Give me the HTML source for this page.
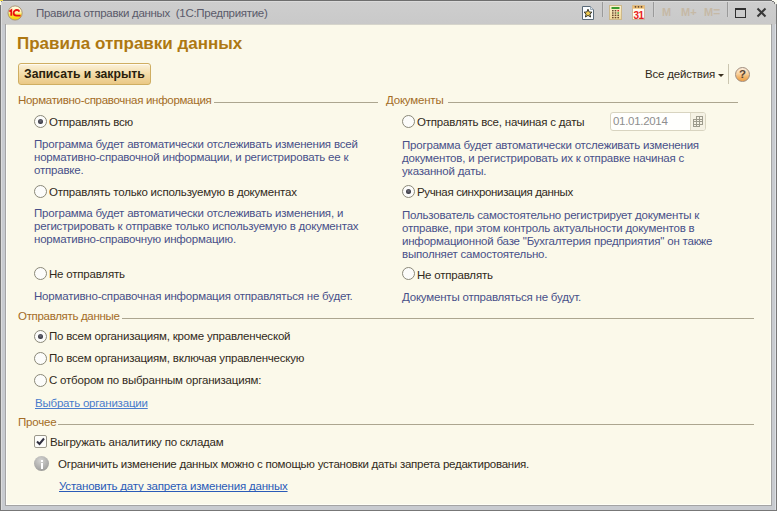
<!DOCTYPE html>
<html><head><meta charset="utf-8">
<style>
*{margin:0;padding:0;box-sizing:border-box}
html,body{width:777px;height:511px;overflow:hidden;background:#fbf9ea}
body{position:relative;font-family:"Liberation Sans",sans-serif}
.a{position:absolute}
.t{position:absolute;white-space:nowrap;font-size:11.5px;line-height:13px;height:13px;letter-spacing:-0.2px;}
.sec{color:#a36c26}
.txt{color:#31291a}
.desc{color:#485089}
.ln{position:absolute;height:1px;background:#aca690}
.rad{position:absolute;width:13px;height:13px;border-radius:50%;border:1px solid #8a8878;background:#fcfcfa}
.rad.on::after{content:"";position:absolute;left:3px;top:3px;width:5px;height:5px;border-radius:50%;background:radial-gradient(circle at 50% 40%,#70707a,#34343f 70%)}
.link{color:#2a5bb8;text-decoration:underline;text-underline-offset:1px;text-decoration-skip-ink:none}
</style></head><body>
<!-- window frame -->
<div class="a" style="left:0;top:0;width:777px;height:511px;background:#c8cbd0"></div>
<div class="a" style="left:0;top:0;width:777px;height:25px;background:linear-gradient(#cecece,#c9c9c9)"></div>
<div class="a" style="left:0;top:0;width:777px;height:1px;background:#6e6e6e"></div>
<div class="a" style="left:1px;top:1px;width:775px;height:1px;background:#dadada"></div>
<div class="a" style="left:0;top:0;width:1px;height:511px;background:#777"></div>
<div class="a" style="left:1px;top:1px;width:1px;height:509px;background:#dcdcdc"></div>
<div class="a" style="left:776px;top:0;width:1px;height:511px;background:#777"></div>
<div class="a" style="left:775px;top:24px;width:1px;height:486px;background:#dde0e4"></div>
<div class="a" style="left:0;top:510px;width:777px;height:1px;background:#777"></div>
<div class="a" style="left:6px;top:24px;width:765px;height:1px;background:#d6d5cc"></div>
<div class="a" style="left:6px;top:25px;width:765px;height:480px;background:#fbf9ea;border-left:1px solid #fffef8;box-shadow:inset -1px 0 0 #fffff6,inset 0 -1px 0 #fffff6"></div>
<div class="a" style="left:5px;top:24px;width:1px;height:482px;background:#a4a4a4"></div>
<div class="a" style="left:771px;top:24px;width:1px;height:482px;background:#a4a4a4"></div>
<div class="a" style="left:5px;top:505px;width:767px;height:1px;background:#a4a4a4"></div>
<!-- corners -->
<div class="a" style="left:0;top:0;width:3px;height:1px;background:#f0d840"></div>
<div class="a" style="left:0;top:1px;width:1px;height:4px;background:#fafae0"></div>
<div class="a" style="left:1px;top:1px;width:1px;height:1px;background:#8a8aa0"></div>
<div class="a" style="left:772px;top:0;width:5px;height:1px;background:#fafaf0"></div>
<div class="a" style="left:774px;top:1px;width:3px;height:1px;background:#fafaf0"></div>
<div class="a" style="left:775px;top:2px;width:2px;height:2px;background:#f4f4ea"></div>
<div class="a" style="left:772px;top:1px;width:2px;height:1px;background:#7a7a7a"></div>
<div class="a" style="left:774px;top:2px;width:1px;height:2px;background:#7a7a7a"></div>
<div class="a" style="left:776px;top:4px;width:1px;height:1px;background:#888"></div>
<!-- title -->
<svg class="a" style="left:7px;top:5px" width="17" height="17" viewBox="0 0 17 17"><defs><linearGradient id="lg" x1="0" y1="0" x2="0" y2="1"><stop offset="0" stop-color="#fffce8"/><stop offset="0.45" stop-color="#fff7b0"/><stop offset="0.6" stop-color="#fce840"/><stop offset="1" stop-color="#f2cc00"/></linearGradient></defs><circle cx="8.1" cy="8" r="7.1" fill="url(#lg)" stroke="#a89070" stroke-width="0.9"/><path d="M2.3 6.4 L4.3 5.2 L4.3 10.8" fill="none" stroke="#e81010" stroke-width="1.8"/><path d="M12.4 6.6 C11.9 5.4 11 5 10 5 C8 5 6.6 6.2 6.6 8 C6.6 9.8 8 10.6 9.6 10.6 L13.6 10.6" fill="none" stroke="#e81010" stroke-width="1.8"/></svg>
<div class="t" style="left:36px;top:6px;font-size:11.5px;letter-spacing:-0.3px;line-height:14px;height:14px;color:#5a5a6a">Правила отправки данных&nbsp; (1С:Предприятие)</div>


<!-- title bar tools -->
<svg class="a" style="left:581px;top:5px" width="14" height="16" viewBox="0 0 14 16">
<path d="M1.5 1.5 H9.5 L12.5 4.5 V14.5 H1.5 Z" fill="#fbfdff" stroke="#5a6a78" stroke-width="1"/>
<path d="M9.5 1.5 V4.5 H12.5" fill="#dde6ee" stroke="#8a9aa8" stroke-width="0.8"/>
<path d="M7 4.2 L8.2 7 L11 7.2 L8.9 9.1 L9.6 12 L7 10.4 L4.4 12 L5.1 9.1 L3 7.2 L5.8 7 Z" fill="#f2cc50" stroke="#3a3a30" stroke-width="1"/>
</svg>
<div class="a" style="left:602px;top:2px;width:1px;height:15px;background:#9a9a9a"></div>
<div class="a" style="left:603px;top:2px;width:1px;height:15px;background:#d2d2d2"></div>
<svg class="a" style="left:609px;top:5px" width="13" height="15" viewBox="0 0 13 15">
<defs><linearGradient id="cg" x1="0" y1="0" x2="0" y2="1"><stop offset="0" stop-color="#fdf3d0"/><stop offset="1" stop-color="#f0d898"/></linearGradient></defs>
<rect x="0.5" y="0.5" width="12" height="14" fill="url(#cg)" stroke="#cdb88a" stroke-width="1"/>
<rect x="2.5" y="2" width="8" height="2" fill="#3a9a30"/>
<g fill="#6a4a30"><rect x="3" y="5" width="1.6" height="1.4"/><rect x="5.7" y="5" width="1.6" height="1.4"/>
<rect x="3" y="7.3" width="1.6" height="1.4"/><rect x="5.7" y="7.3" width="1.6" height="1.4"/>
<rect x="3" y="9.6" width="1.6" height="1.4"/><rect x="5.7" y="9.6" width="1.6" height="1.4"/><rect x="8.4" y="9.6" width="1.6" height="1.4"/>
<rect x="3" y="11.9" width="1.6" height="1.4"/><rect x="5.7" y="11.9" width="1.6" height="1.4"/><rect x="8.4" y="11.9" width="1.6" height="1.4"/></g>
<rect x="8.4" y="5" width="1.6" height="1.4" fill="#d83030"/><rect x="8.4" y="7.3" width="1.6" height="1.4" fill="#30a030"/>
</svg>
<svg class="a" style="left:632px;top:5px" width="13" height="15" viewBox="0 0 13 15">
<rect x="0.5" y="0.5" width="12" height="14" fill="#fffaf0" stroke="#c8b8a0" stroke-width="1"/>
<rect x="0.5" y="0.5" width="12" height="3.2" fill="#f2c070"/>
<g fill="#5a4030"><circle cx="3.5" cy="1.8" r="0.9"/><circle cx="6.5" cy="1.8" r="0.9"/><circle cx="9.5" cy="1.8" r="0.9"/></g>
<text x="6.4" y="13.6" text-anchor="middle" font-family="Liberation Sans" font-size="10" font-weight="bold" fill="#e82020" letter-spacing="-0.6">31</text>
</svg>
<div class="a" style="left:653px;top:2px;width:1px;height:15px;background:#9a9a9a"></div>
<div class="a" style="left:654px;top:2px;width:1px;height:15px;background:#d2d2d2"></div>
<div class="a" style="left:662px;top:6px;font:bold 11px/12px 'Liberation Sans';color:#c6b9a6">M</div>
<div class="a" style="left:681px;top:6px;font:bold 11px/12px 'Liberation Sans';color:#c6b9a6">M<span style="font-size:11px">+</span></div>
<div class="a" style="left:704px;top:6px;font:bold 11px/12px 'Liberation Sans';color:#c6b9a6">M<span style="font-size:12px">=</span></div>
<div class="a" style="left:727px;top:2px;width:1px;height:15px;background:#9a9a9a"></div>
<div class="a" style="left:728px;top:2px;width:1px;height:15px;background:#d2d2d2"></div>
<div class="a" style="left:735px;top:8px;width:11px;height:10px;border:1px solid #303030;border-top-width:2px"></div>
<svg class="a" style="left:756px;top:7px" width="11" height="11" viewBox="0 0 11 11"><path d="M1.5 1.5 L9.5 9.5 M9.5 1.5 L1.5 9.5" stroke="#383838" stroke-width="2"/></svg>

<!-- heading -->
<div class="t" style="left:17px;top:34px;font-size:17px;letter-spacing:0;transform:none;line-height:19px;height:19px;font-weight:bold;color:#ae7812">Правила отправки данных</div>

<!-- button -->
<div class="a" style="left:18px;top:63px;width:133px;height:22px;border:1px solid #cfae62;border-radius:3px;background:linear-gradient(#fbf2dc,#f3dca8 50%,#eac885);box-shadow:inset 0 1px 0 #fffaf0"></div>
<div class="t" style="left:24px;top:67px;font-size:12.2px;letter-spacing:0;transform:none;line-height:14px;height:14px;font-weight:bold;color:#2a1e0c">Записать и закрыть</div>

<div class="t txt" style="left:645px;top:68px">Все действия</div>
<div class="a" style="left:718px;top:74px;width:0;height:0;border-left:3px solid transparent;border-right:3px solid transparent;border-top:3px solid #3a3020"></div>
<div class="a" style="left:728px;top:64px;width:1px;height:20px;background:#cbc6b0"></div>
<div class="a" style="left:735px;top:67px;width:15px;height:15px;border-radius:50%;border:1px solid #a08c7c;background:linear-gradient(#fdeedd,#f9d6a6 40%,#f2b060 75%,#eea24a)"></div>
<div class="t" style="left:739px;top:68px;font-weight:bold;color:#5a4535">?</div>

<!-- section 1 -->
<div class="t sec" style="left:18px;top:94px;letter-spacing:-0.3px">Нормативно-справочная информация</div>
<div class="ln" style="left:214px;top:102px;width:164px"></div>
<div class="t sec" style="left:386px;top:94px">Документы</div>
<div class="ln" style="left:448px;top:102px;width:290px"></div>

<div class="rad on" style="left:34px;top:115px"></div>
<div class="t txt" style="left:49px;top:116px">Отправлять всю</div>
<div class="t desc" style="left:34px;top:138px">Программа будет автоматически отслеживать изменения всей</div>
<div class="t desc" style="left:34px;top:151px">нормативно-справочной информации, и регистрировать ее к</div>
<div class="t desc" style="left:34px;top:164px">отправке.</div>

<div class="rad" style="left:34px;top:185px"></div>
<div class="t txt" style="left:49px;top:186px">Отправлять только используемую в документах</div>
<div class="t desc" style="left:34px;top:207px">Программа будет автоматически отслеживать изменения, и</div>
<div class="t desc" style="left:34px;top:220px">регистрировать к отправке только используемую в документах</div>
<div class="t desc" style="left:34px;top:233px">нормативно-справочную информацию.</div>

<div class="rad" style="left:34px;top:267px"></div>
<div class="t txt" style="left:49px;top:268px">Не отправлять</div>
<div class="t desc" style="left:34px;top:290px">Нормативно-справочная информация отправляться не будет.</div>

<!-- right column -->
<div class="rad" style="left:402px;top:115px"></div>
<div class="t txt" style="left:417px;top:116px">Отправлять все, начиная с даты</div>
<div class="a" style="left:610px;top:112px;width:96px;height:19px;border:1px solid #d8d4c0;border-radius:3px;background:#fffffd"></div>
<div class="a" style="left:690px;top:113px;width:15px;height:17px;background:#f5f2e4;border-left:1px solid #dedac8;border-radius:0 2px 2px 0"></div>
<div class="t" style="left:613px;top:115px;color:#8e8e8e;letter-spacing:-0.3px">01.01.2014</div>
<svg class="a" style="left:692px;top:115px" width="12" height="13" viewBox="0 0 12 13">
<g fill="none" stroke="#9c9a8c" stroke-width="1">
<path d="M4 1.5 H11 M1 4.5 H11 M1 6.5 H11 M1 9.5 H11 M1 11.5 H8"/>
<path d="M1.5 4 V12 M4.5 1 V12 M7.5 1 V12 M10.5 1 V10"/>
</g></svg>
<div class="t desc" style="left:402px;top:139px">Программа будет автоматически отслеживать изменения</div>
<div class="t desc" style="left:402px;top:152px">документов, и регистрировать их к отправке начиная с</div>
<div class="t desc" style="left:402px;top:165px">указанной даты.</div>

<div class="rad on" style="left:402px;top:185px"></div>
<div class="t txt" style="left:417px;top:186px;letter-spacing:-0.35px">Ручная синхронизация данных</div>
<div class="t desc" style="left:402px;top:209px">Пользователь самостоятельно регистрирует документы к</div>
<div class="t desc" style="left:402px;top:222px">отправке, при этом контроль актуальности документов в</div>
<div class="t desc" style="left:402px;top:235px">информационной базе "Бухгалтерия предприятия" он также</div>
<div class="t desc" style="left:402px;top:248px">выполняет самостоятельно.</div>

<div class="rad" style="left:402px;top:267px"></div>
<div class="t txt" style="left:417px;top:269px">Не отправлять</div>
<div class="t desc" style="left:402px;top:291px">Документы отправляться не будут.</div>

<!-- section 3 -->
<div class="t sec" style="left:18px;top:310px;letter-spacing:-0.32px">Отправлять данные</div>
<div class="ln" style="left:122px;top:318px;width:632px"></div>
<div class="rad on" style="left:34px;top:330px"></div>
<div class="t txt" style="left:49px;top:330px">По всем организациям, кроме управленческой</div>
<div class="rad" style="left:34px;top:352px"></div>
<div class="t txt" style="left:49px;top:352px">По всем организациям, включая управленческую</div>
<div class="rad" style="left:34px;top:374px"></div>
<div class="t txt" style="left:49px;top:374px">С отбором по выбранным организациям:</div>
<div class="t link" style="left:35px;top:397px;color:#4a7ccc">Выбрать организации</div>

<!-- section 4 -->
<div class="t sec" style="left:18px;top:416px">Прочее</div>
<div class="ln" style="left:58px;top:424px;width:696px"></div>
<div class="a" style="left:34px;top:435px;width:13px;height:13px;border:1px solid #9a978a;border-radius:2px;background:#fdfdfa"></div>
<svg class="a" style="left:34px;top:435px" width="13" height="13" viewBox="0 0 13 13"><path d="M3 6.5 L5.5 9 L10 3.5" fill="none" stroke="#303040" stroke-width="2"/></svg>
<div class="t txt" style="left:50px;top:436px">Выгружать аналитику по складам</div>
<div class="a" style="left:34px;top:456px;width:15px;height:15px;border-radius:50%;background:radial-gradient(circle at 45% 30%,#d4d4d2,#a8a8a6 65%,#86867f)"></div>
<div class="a" style="left:40.5px;top:459.5px;width:2.5px;height:2.5px;background:#fff"></div>
<div class="a" style="left:40.5px;top:463px;width:2.5px;height:6px;background:#fff"></div>
<div class="t txt" style="left:58px;top:458px;letter-spacing:-0.25px">Ограничить изменение данных можно с помощью установки даты запрета редактирования.</div>
<div class="t link" style="left:59px;top:480px">Установить дату запрета изменения данных</div>
</body></html>
